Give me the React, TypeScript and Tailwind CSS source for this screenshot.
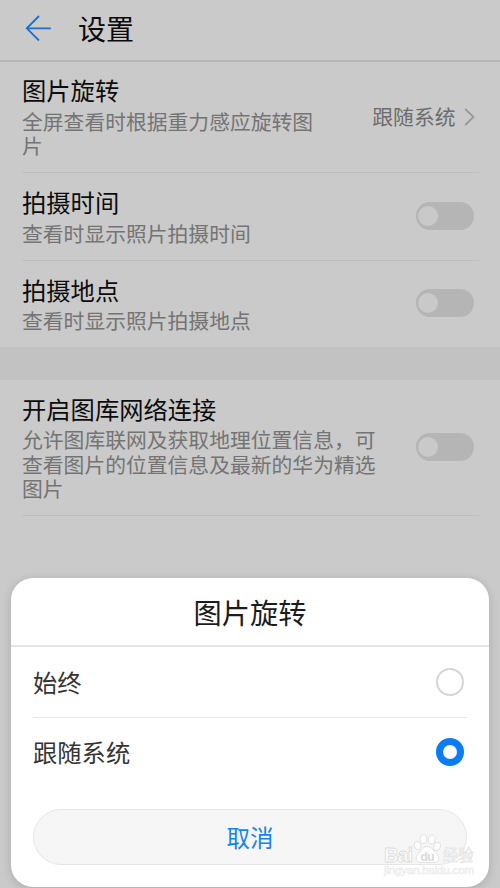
import React, { useState } from "react";

const ROTATION_OPTIONS = ["始终", "跟随系统"];

function Toggle({ checked, onChange }: { checked: boolean; onChange: () => void }) {
  return (
    <button
      role="switch"
      aria-checked={checked}
      onClick={onChange}
      className={`flex h-7 w-[58px] shrink-0 items-center rounded-full bg-[#b5b5b5] px-[2px] ${
        checked ? "justify-end" : "justify-start"
      }`}
    >
      <span className="size-5 rounded-full bg-[#c9c9c9]" />
    </button>
  );
}

function RowText({ title, children }: { title: string; children: React.ReactNode }) {
  return (
    <div className="min-w-0 flex-1">
      <h2 className="h-[35.8px] text-[24.3px] leading-[34px] text-[#0c0c0c]">{title}</h2>
      <p className="text-[20.8px] leading-[24.4px] whitespace-nowrap text-[#747474]">{children}</p>
    </div>
  );
}

function PawWatermark() {
  return (
    <div className="pointer-events-none absolute top-[832px] left-[383px] w-[95px]">
      <svg width="95" height="48" viewBox="0 0 95 48" className="block">
        <g fill="#fdfdfd" stroke="#dcdcdc" strokeWidth=".8">
          <text x="1" y="29.500" fontFamily="Liberation Sans" fontWeight="700" fontSize="20" textLength="29">
            Bai
          </text>
          <ellipse cx="34.500" cy="13.500" rx="3.200" ry="4.300" transform="rotate(-15 34.500 13.500)" />
          <ellipse cx="40.500" cy="7" rx="3.300" ry="4.500" />
          <ellipse cx="48.800" cy="7.500" rx="3.300" ry="4.500" transform="rotate(12 48.800 7.500)" />
          <ellipse cx="54" cy="14.500" rx="3.300" ry="4.300" transform="rotate(20 54 14.500)" />
          <path d="M43.800 14.500c-4 0-5.200 4-8 6.500-4.500 4-3 9.500 2 9.500h13.500c5 0 6.200-5 2.200-9-3-3-5-7-9.700-7Z" />
          <text x="59.500" y="29" fontFamily="Noto Sans CJK SC" fontSize="15.500" strokeWidth=".5" textLength="31">
            经验
          </text>
        </g>
        <text x="37.500" y="28.500" fontFamily="Liberation Sans" fontWeight="700" fontSize="12" fill="#dadada" textLength="14">
          du
        </text>
        <text
          x="1"
          y="42"
          fontFamily="Liberation Sans"
          fontSize="11.500"
          fill="#f4f4f4"
          stroke="#e8e8e8"
          strokeWidth=".4"
          textLength="90"
        >
          jingyan.baidu.com
        </text>
      </svg>
    </div>
  );
}

export default function App() {
  const [showTime, setShowTime] = useState(false);
  const [showPlace, setShowPlace] = useState(false);
  const [network, setNetwork] = useState(false);
  const [rotation, setRotation] = useState("跟随系统");

  return (
    <div className="relative h-[888px] w-[500px] overflow-hidden bg-[#cacaca] font-['Noto_Sans_CJK_SC',sans-serif]">
      {/* Header */}
      <header className="flex h-[62px] items-center border-b-2 border-[#b6b6b6] pb-[4px] pl-[25px]">
        <svg width="28" height="28" viewBox="0 0 28 28" fill="none" stroke="#1b6fcb" strokeWidth="1.8">
          <path d="M25.800 14.300H1.800M14 2 1.800 14.300 14 26.500" />
        </svg>
        <h1 className="ml-[25px] text-[28px] leading-10 text-[#0c0c0c]">设置</h1>
      </header>

      {/* Settings list */}
      <main>
        <section className="pr-[21px] pl-[22px]">
          <div className="flex h-[111px] border-b border-[#bebebe] pt-[11.2px] pr-[4.5px]">
            <RowText title="图片旋转">
              全屏查看时根据重力感应旋转图
              <br />片
            </RowText>
            <div className="mt-[28px] flex h-[30px] items-center">
              <span className="text-[20.8px] leading-[30px] text-[#6c6c6c]">{rotation}</span>
              <svg className="ml-2 mt-px" width="11" height="18" viewBox="0 0 11 18" fill="none" stroke="#999" strokeWidth="1.8">
                <path d="m1.200 1 8.300 8-8.300 8" />
              </svg>
            </div>
          </div>
          <div className="flex h-[88px] border-b border-[#bebebe] pt-3 pr-[5.5px]">
            <RowText title="拍摄时间">查看时显示照片拍摄时间</RowText>
            <div className="pt-[17px]">
              <Toggle checked={showTime} onChange={() => setShowTime(!showTime)} />
            </div>
          </div>
          <div className="flex h-[86px] pt-[11.6px] pr-[5.5px]">
            <RowText title="拍摄地点">查看时显示照片拍摄地点</RowText>
            <div className="pt-[16.4px]">
              <Toggle checked={showPlace} onChange={() => setShowPlace(!showPlace)} />
            </div>
          </div>
        </section>

        <div className="h-[33px] bg-[#c2c2c2]" />

        <section className="pr-[21px] pl-[22px]">
          <div className="flex h-[136px] border-b border-[#bebebe] pt-[11.6px] pr-[5.5px]">
            <RowText title="开启图库网络连接">
              允许图库联网及获取地理位置信息，可
              <br />
              查看图片的位置信息及最新的华为精选
              <br />
              图片
            </RowText>
            <div className="pt-[41.4px]">
              <Toggle checked={network} onChange={() => setNetwork(!network)} />
            </div>
          </div>
        </section>
      </main>

      {/* Bottom sheet */}
      <div
        role="dialog"
        className="absolute top-[578px] left-[11px] h-[309px] w-[478px] rounded-[22px] bg-white shadow-[0_2px_10px_rgba(0,0,0,0.16)]"
      >
        <h2 className="h-[69px] border-b-2 border-[#e5e5e5] text-center text-[28.2px] leading-[67px] text-[#1c1c1c]">
          图片旋转
        </h2>
        <div className="px-[22px]">
          {ROTATION_OPTIONS.map((option, i) => (
            <button
              key={option}
              onClick={() => setRotation(option)}
              className={`flex w-full items-center justify-between pr-[3px] ${
                i === 0 ? "h-[71px] border-b border-[#e6e6e6]" : "h-[68px]"
              }`}
            >
              <span className="text-[24.3px] leading-9 text-[#343434]">{option}</span>
              <span
                className={`size-7 rounded-full bg-white ${
                  rotation === option ? "border-[7px] border-[#0a7cf8]" : "border-2 border-[#d6d6d6]"
                }`}
              />
            </button>
          ))}
          <button className="mt-[23px] h-14 w-full rounded-full border border-[#e6e6e6] bg-[#f6f6f6] text-[23.5px] leading-[54px] text-[#1583ea]">
            取消
          </button>
        </div>
      </div>

      <PawWatermark />
    </div>
  );
}
